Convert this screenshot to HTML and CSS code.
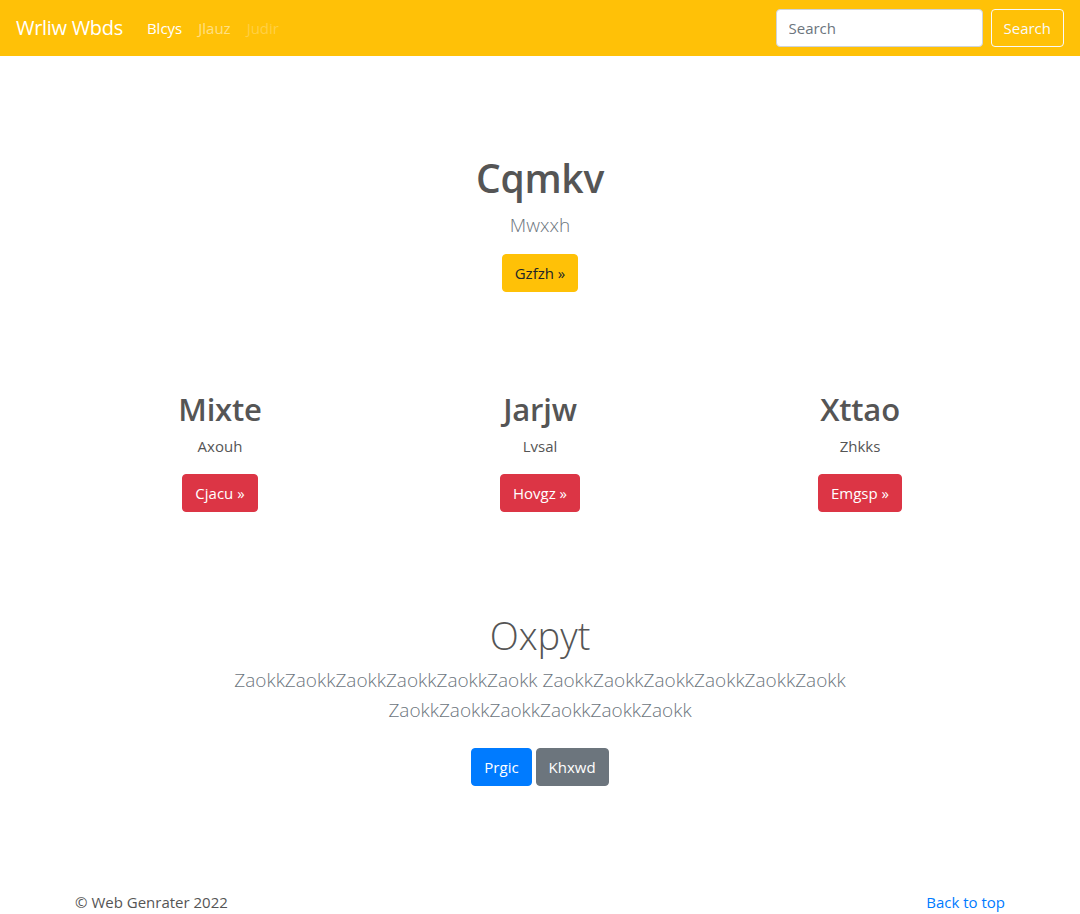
FILE: index.html
```html
<!DOCTYPE html>
<html lang="en">
<head>
<meta charset="utf-8">
<title>Wrliw Wbds</title>
<link rel="stylesheet" href="styles.css">
</head>
<body>
<nav class="navbar">
  <a class="brand" href="#">Wrliw Wbds</a>
  <ul class="nav-links">
    <li><a class="nav-link active" href="#">Blcys</a></li>
    <li><a class="nav-link" href="#">Jlauz</a></li>
    <li><a class="nav-link disabled" href="#">Judir</a></li>
  </ul>
  <form class="search-form">
    <input class="search-input" type="text" placeholder="Search">
    <button class="btn btn-outline-light" type="button">Search</button>
  </form>
</nav>

<main>
  <section class="hero">
    <h1 class="hero-title">Cqmkv</h1>
    <p class="lead">Mwxxh</p>
    <a class="btn btn-warning" href="#">Gzfzh &raquo;</a>
  </section>

  <section class="features">
    <div class="feature">
      <h2 class="feature-title">Mixte</h2>
      <p class="feature-text">Axouh</p>
      <a class="btn btn-danger" href="#">Cjacu &raquo;</a>
    </div>
    <div class="feature">
      <h2 class="feature-title">Jarjw</h2>
      <p class="feature-text">Lvsal</p>
      <a class="btn btn-danger" href="#">Hovgz &raquo;</a>
    </div>
    <div class="feature">
      <h2 class="feature-title">Xttao</h2>
      <p class="feature-text">Zhkks</p>
      <a class="btn btn-danger" href="#">Emgsp &raquo;</a>
    </div>
  </section>

  <section class="album">
    <h1 class="album-title">Oxpyt</h1>
    <p class="lead album-lead">ZaokkZaokkZaokkZaokkZaokkZaokk ZaokkZaokkZaokkZaokkZaokkZaokk ZaokkZaokkZaokkZaokkZaokkZaokk</p>
    <div class="album-actions">
      <a class="btn btn-primary" href="#">Prgic</a>
      <a class="btn btn-secondary" href="#">Khxwd</a>
    </div>
  </section>
</main>

<footer class="footer">
  <span class="copyright">&copy; Web Genrater 2022</span>
  <a class="back-top" href="#">Back to top</a>
</footer>
</body>
</html>
```

FILE: styles.css
```css
* { box-sizing: border-box; }

body {
  margin: 0;
  font-family: "Open Sans", "Noto Sans", sans-serif;
  font-size: 16px;
  line-height: 1.5;
  color: #555;
  background: #fff;
}

a { text-decoration: none; }

.navbar {
  display: flex;
  align-items: center;
  height: 56px;
  padding: 0 16px;
  background: #ffc107;
}

.brand {
  color: #fff;
  font-size: 20px;
  line-height: 30px;
  margin-right: 16px;
  padding: 5px 0;
  letter-spacing: -0.3px;
}

.nav-links {
  display: flex;
  list-style: none;
  margin: 0;
  padding: 0;
  flex: 1;
}

.nav-link {
  display: block;
  padding: 8px;
  color: rgba(255, 255, 255, 0.5);
  font-size: 15px;
}

.nav-link.active { color: #fff; }
.nav-link.disabled { color: rgba(255, 255, 255, 0.25); }

.search-form {
  display: flex;
  align-items: center;
}

.search-input {
  width: 207px;
  height: 38px;
  padding: 6px 12px;
  font: inherit;
  font-size: 15px;
  color: #495057;
  border: 1px solid #ced4da;
  border-radius: 4px;
  margin-right: 8px;
  background: #fff;
}

.search-input::placeholder { color: #6c757d; }

.btn {
  display: inline-block;
  height: 38px;
  padding: 0 12px;
  font: inherit;
  font-size: 15px;
  line-height: 36px;
  border: 1px solid transparent;
  border-radius: 4px;
  text-align: center;
  cursor: pointer;
}

.btn-outline-light {
  background: transparent;
  border-color: #f8f9fa;
  color: #f8f9fa;
}

.btn-warning { background: #ffc107; border-color: #ffc107; color: #212529; }
.btn-danger { background: #dc3545; border-color: #dc3545; color: #fff; }
.btn-primary { background: #007bff; border-color: #007bff; color: #fff; }
.btn-secondary { background: #6c757d; border-color: #6c757d; color: #fff; }

.hero {
  display: flex;
  flex-direction: column;
  align-items: center;
  padding-top: 98px;
}

.hero-title {
  margin: 0 0 8px;
  font-size: 39px;
  line-height: 48px;
  font-weight: 600;
  letter-spacing: -0.3px;
}

.lead {
  margin: 0 0 14px;
  font-size: 19px;
  line-height: 30px;
  font-weight: 300;
  color: #6c757d;
}

.features {
  display: grid;
  grid-template-columns: repeat(3, 1fr);
  width: 960px;
  margin: 98px auto 0;
}

.feature {
  display: flex;
  flex-direction: column;
  align-items: center;
  padding: 0 15px;
}

.feature-title {
  margin: 0 0 6px;
  font-size: 31px;
  line-height: 38px;
  font-weight: 600;
  letter-spacing: -0.2px;
}

.feature-text {
  margin: 0 0 16px;
  font-size: 15px;
  line-height: 24px;
}

.album {
  display: flex;
  flex-direction: column;
  align-items: center;
  margin-top: 99px;
}

.album-title {
  margin: 0 0 6px;
  font-size: 38px;
  line-height: 48px;
  font-weight: 300;
}

.album-lead {
  max-width: 720px;
  text-align: center;
  margin-bottom: 23px;
}

.album-actions {
  display: flex;
  gap: 4px;
}

.footer {
  display: flex;
  justify-content: space-between;
  width: 960px;
  margin: 104px auto 0;
  padding: 0 15px;
  font-size: 15px;
  line-height: 24px;
}

.copyright { color: #555; }
.back-top { color: #007bff; }
```
